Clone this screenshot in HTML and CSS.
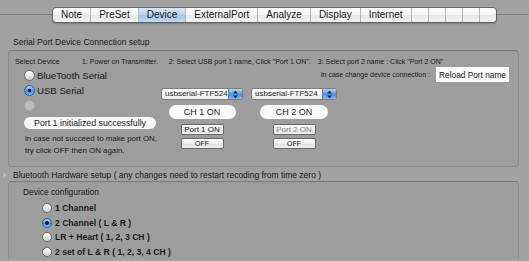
FILE: index.html
```html
<!DOCTYPE html>
<html>

<head>
  <meta charset="utf-8">
  <title>Device</title>
  <link rel="stylesheet" href="styles.css">
</head>

<body>
  <div class="tabbar">
    <span class="tabline"></span>
    <div class="tabs">
      <span class="tab">Note</span>
      <span class="tab">PreSet</span>
      <span class="tab selected">Device</span>
      <span class="tab">ExternalPort</span>
      <span class="tab">Analyze</span>
      <span class="tab">Display</span>
      <span class="tab">Internet</span>
      <span class="tab empty"></span>
      <span class="tab empty"></span>
      <span class="tab empty"></span>
      <span class="tab empty"></span>
      <span class="tab empty"></span>
    </div>
    <span class="tabline rest"></span>
  </div>

  <div class="section-title">Serial Port Device Connection setup</div>
  <div class="groupbox serial">
    <div class="steps-row">
      <span class="select-label">Select Device</span>
      <span class="steps">
        <span>1: Power on Transmitter.</span>
        <span class="step">2: Select USB port 1 name, Click "Port 1 ON".</span>
        <span class="step short">3: Select port 2 name : Click "Port 2 ON"</span>
      </span>
    </div>
    <div class="serial-body">
      <div class="device-col">
        <div class="radio-row"><span class="radio"></span>BlueTooth Serial</div>
        <div class="radio-row"><span class="radio on"></span>USB Serial</div>
        <div class="radio-row"><span class="radio off"></span></div>
        <div class="status-pill">Port 1 initialized successfully</div>
        <p class="hint">in case not succeed to make port ON,<br>try click OFF then ON again.</p>
      </div>
      <div class="port-area">
        <div class="reload-row">
          <span>in case change device connection :</span>
          <button type="button" class="reload">Reload Port name</button>
        </div>
        <div class="channels">
          <div class="channel one">
            <div class="popup">
              <span class="popup-text">usbserial-FTF524</span>
              <span class="popup-arrows">
                <svg width="7" height="9" viewBox="0 0 7 9"><path d="M3.5 0.5 L6 3.6 H1 Z M3.5 8.5 L6 5.4 H1 Z" fill="#1b2b4a"/></svg>
              </span>
            </div>
            <div class="pill">CH 1 ON</div>
            <button type="button" class="push">Port 1 ON</button>
            <button type="button" class="push off">OFF</button>
          </div>
          <div class="channel two">
            <div class="popup">
              <span class="popup-text">usbserial-FTF524</span>
              <span class="popup-arrows">
                <svg width="7" height="9" viewBox="0 0 7 9"><path d="M3.5 0.5 L6 3.6 H1 Z M3.5 8.5 L6 5.4 H1 Z" fill="#1b2b4a"/></svg>
              </span>
            </div>
            <div class="pill">CH 2 ON</div>
            <button type="button" class="push disabled">Port 2 ON</button>
            <button type="button" class="push off">OFF</button>
          </div>
        </div>
      </div>
    </div>
  </div>

  <div class="section-title bt"><span class="disclosure"></span>Bluetooth Hardware setup ( any changes need to restart recoding from time zero )</div>
  <div class="groupbox config">
    <div class="config-title">Device configuration</div>
    <div class="config-list">
      <div class="config-row"><span class="radio small"></span>1 Channel</div>
      <div class="config-row"><span class="radio small on"></span>2 Channel ( L &amp; R )</div>
      <div class="config-row"><span class="radio small"></span>LR + Heart ( 1, 2, 3 CH )</div>
      <div class="config-row"><span class="radio small"></span>2 set of L &amp; R ( 1, 2, 3, 4 CH )</div>
    </div>
  </div>
</body>

</html>
```

FILE: styles.css
```css
body {
  margin: 0;
  width: 529px;
  height: 261px;
  overflow: hidden;
  background: #a1a1a1;
  font-family: "Liberation Sans", Arial, sans-serif;
  color: #1a1a1a;
}

/* tab bar */
.tabbar {
  display: flex;
  align-items: center;
  padding-top: 7px;
  height: 16px;
}

.tabline {
  width: 52px;
  border-top: 1px solid #7b7b7b;
  margin-top: -2px;
}

.tabline.rest {
  flex: 1;
}

.tabs {
  display: flex;
  height: 16px;
  box-sizing: border-box;
  border: 1px solid #626262;
  border-radius: 4px;
  background: linear-gradient(#ffffff, #f4f4f4 50%, #e8e8e8 51%, #f2f2f2);
  box-shadow: 0 1px 1px rgba(0, 0, 0, 0.2);
  overflow: hidden;
}

.tab {
  font-size: 10px;
  line-height: 14px;
  padding: 0 8px;
  border-left: 1px solid #b8b8b8;
}

.tab:first-child {
  border-left: none;
}

.tab.selected {
  background: linear-gradient(#dae8f8, #b7d0f0 50%, #a5c4ec 51%, #c2d8f3);
}

.tab.empty {
  width: 16px;
  padding: 0;
}

/* sections */
.section-title {
  margin-top: 14px;
  padding-left: 13px;
  font-size: 8.5px;
  line-height: 10px;
}

.section-title.bt {
  display: flex;
  align-items: center;
  margin-top: 3px;
  padding-left: 3px;
}

.disclosure {
  width: 0;
  height: 0;
  margin-right: 6px;
  border-left: 4px solid #b6b6b6;
  border-top: 3px solid transparent;
  border-bottom: 3px solid transparent;
}

.groupbox {
  margin: 3px 10px 0 8px;
  border: 1px solid rgba(0, 0, 0, 0.12);
  border-top-color: rgba(0, 0, 0, 0.22);
  border-radius: 4px;
  background: rgba(0, 0, 0, 0.025);
}

.steps-row {
  display: flex;
  align-items: center;
  height: 10px;
  padding: 5px 0 0 6px;
}

.select-label {
  width: 67px;
  font-size: 7.3px;
}

.steps {
  font-size: 7px;
  white-space: nowrap;
}

.step {
  margin-left: 9px;
}

.step.short {
  margin-left: 5px;
}

.serial-body {
  display: grid;
  grid-template-columns: 136px 1fr;
  margin-top: 1px;
  padding: 0 9px 9px 15px;
}

.device-col {
  padding-top: 1px;
}

.radio-row {
  display: flex;
  align-items: center;
  gap: 2px;
  height: 15px;
  font-size: 9.6px;
}

.radio {
  flex: none;
  width: 11px;
  height: 11px;
  box-sizing: border-box;
  border: 1px solid #6c6c6c;
  border-radius: 50%;
  background: linear-gradient(#ffffff, #e4e4e4 60%, #d2d2d2);
}

.radio.on {
  border-color: #36598a;
  background: radial-gradient(circle, #0f1c33 0 1.5px, transparent 2.2px),
    linear-gradient(#b0d2f7, #4a8ce0 55%, #86bbf1);
}

.radio.off {
  border-color: #a6a6a6;
  background: #bcbcbc;
}

.radio.small {
  width: 10px;
  height: 10px;
}

.status-pill {
  margin-top: 4px;
  width: 132px;
  height: 12px;
  border-radius: 6px;
  background: #f7f7f7;
  font-size: 8.8px;
  line-height: 12px;
  text-align: center;
}

.hint {
  margin: 4px 0 0 1px;
  font-size: 7.9px;
  line-height: 12px;
}

/* ports */
.reload-row {
  display: flex;
  justify-content: flex-end;
  align-items: center;
  gap: 6px;
  height: 15px;
  font-size: 7px;
}

.reload {
  width: 73px;
  height: 15px;
  padding: 0;
  border: none;
  background: #f8f8f8;
  font-family: inherit;
  font-size: 8.3px;
  color: #1a1a1a;
}

.channels {
  display: flex;
  gap: 8px;
  margin-top: 6px;
  padding-left: 1px;
}

.channel {
  display: flex;
  flex-direction: column;
  align-items: center;
}

.channel.one {
  width: 82px;
}

.channel.two {
  width: 86px;
}

.popup {
  display: flex;
  width: 100%;
  height: 12px;
  box-sizing: border-box;
  border: 1px solid #7e7e7e;
  border-radius: 3px;
  background: linear-gradient(#ffffff, #ededed);
  overflow: hidden;
}

.popup-text {
  flex: 1;
  padding-left: 3px;
  font-size: 8px;
  line-height: 10px;
  overflow: hidden;
  white-space: nowrap;
}

.popup-arrows {
  display: flex;
  align-items: center;
  justify-content: center;
  width: 13px;
  border-left: 1px solid #5c7fa9;
  background: linear-gradient(#b8d5f6, #4e90e1 55%, #86b9f0);
}

.pill {
  margin-top: 5px;
  width: 67px;
  height: 14px;
  border-radius: 7px;
  background: #fafafa;
  font-size: 9px;
  line-height: 14px;
  text-align: center;
}

.channel.two .pill {
  width: 68px;
}

.push {
  margin-top: 5px;
  width: 43px;
  height: 11px;
  box-sizing: border-box;
  padding: 0;
  border: 1px solid #6a6a6a;
  border-radius: 2px;
  background: linear-gradient(#ffffff, #ececec 50%, #dedede 51%, #f0f0f0);
  font-family: inherit;
  font-size: 8px;
  line-height: 9px;
  color: #1a1a1a;
}

.push.off {
  margin-top: 3px;
  font-size: 7px;
}

.push.disabled {
  color: #8a8a8a;
}

/* bluetooth config, runs on past the window bottom */
.config {
  margin-top: 1px;
  padding: 5px 14px 0;
  border-bottom: none;
  border-radius: 4px 4px 0 0;
}

.config-title {
  font-size: 8.4px;
  line-height: 10px;
}

.config-list {
  margin: 4px 0 0 19px;
}

.config-row {
  display: flex;
  align-items: center;
  gap: 3px;
  height: 14.5px;
  font-size: 8.6px;
  font-weight: bold;
}
```
